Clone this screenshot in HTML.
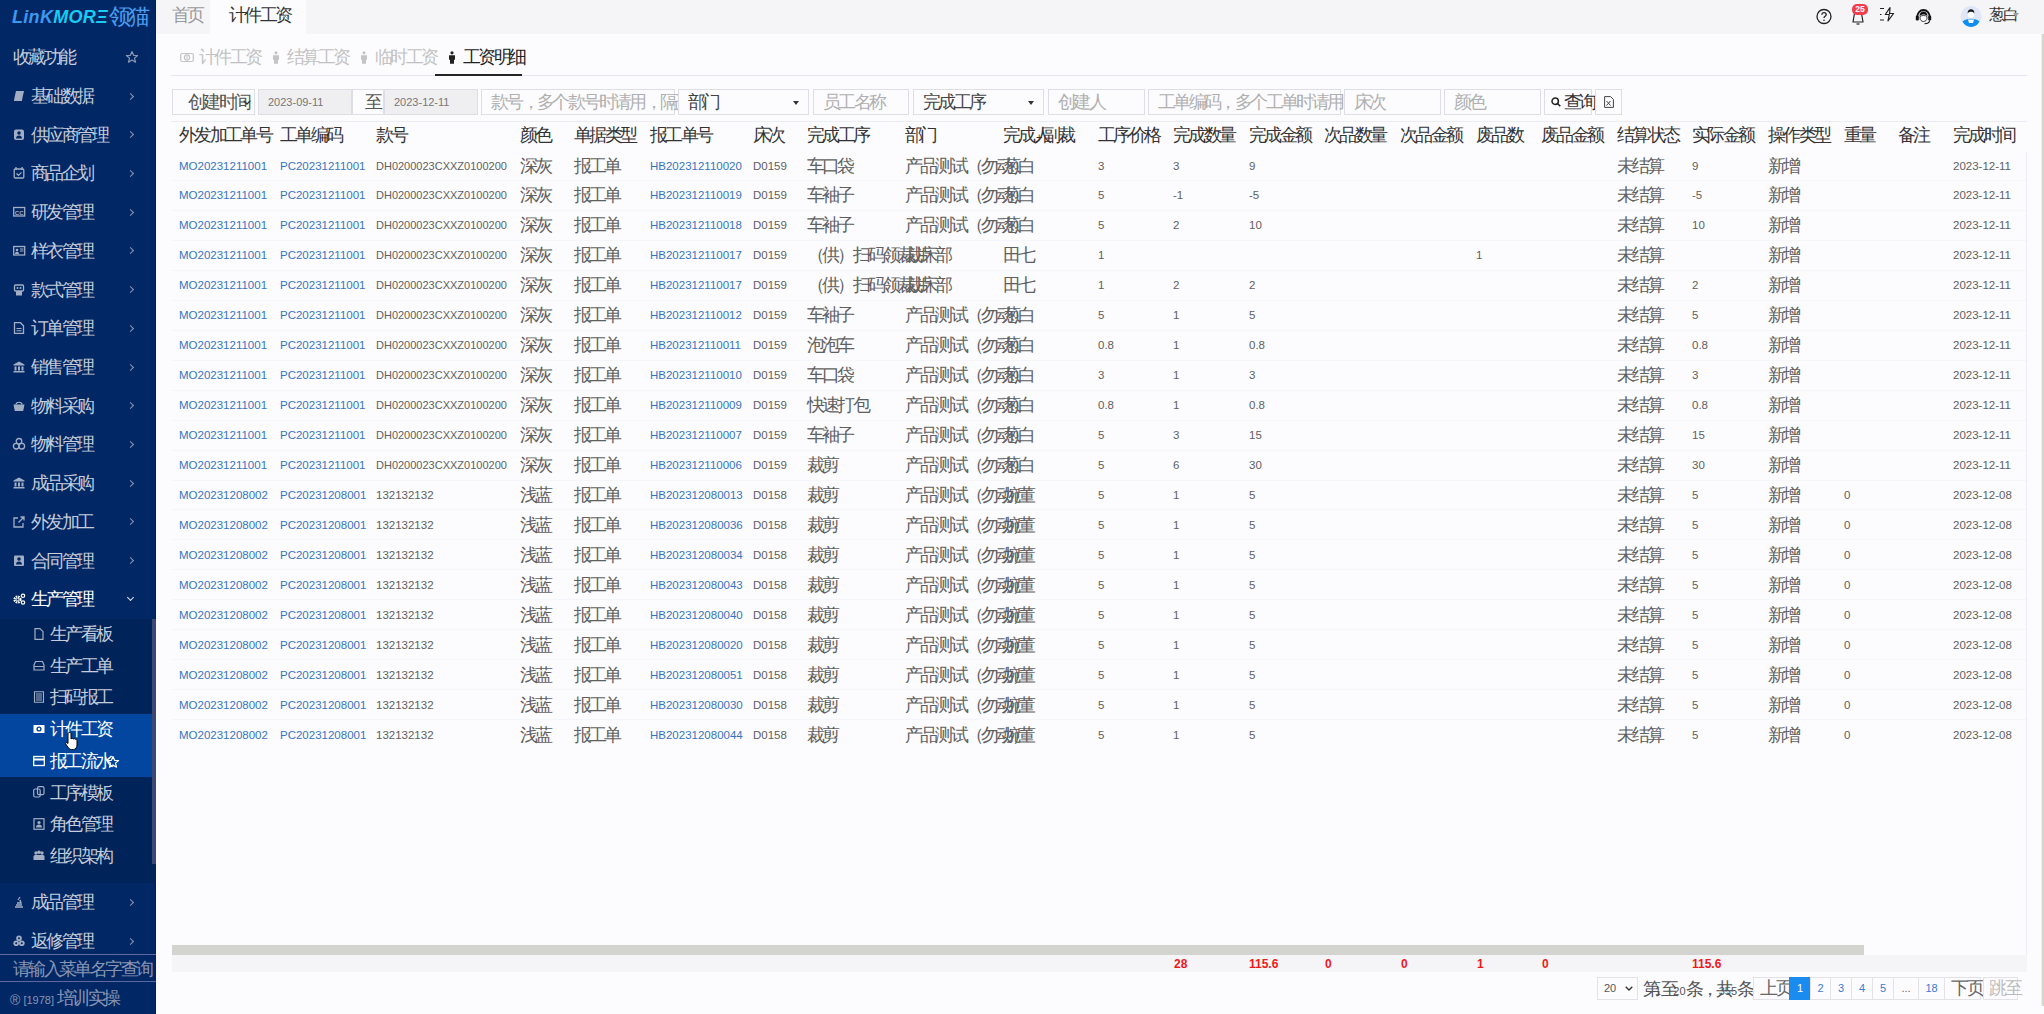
<!DOCTYPE html><html><head><meta charset="utf-8"><style>
*{box-sizing:border-box}
body{margin:0;width:2044px;height:1014px;overflow:hidden;background:#fcfcfe;font-family:"Liberation Sans",sans-serif;position:relative;font-size:11px;color:#555}
.a{position:absolute;white-space:nowrap}
.j{font-size:1.600em;font-weight:normal;letter-spacing:-0.150em;vertical-align:0.00px;display:inline-block;white-space:nowrap;text-align:justify;text-align-last:justify}
svg{position:absolute;overflow:visible}
.mi{position:absolute;left:31px;font-size:11px;line-height:14px;font-weight:bold;color:#c5ccdb}
.ch{position:absolute;left:128px;width:5px;height:5px;border-right:1px solid #8d98b4;border-top:1px solid #8d98b4;transform:rotate(45deg)}
.si{position:absolute;left:50px;font-size:11px;line-height:14px;color:#c5ccdb}
.th{position:absolute;top:128px;font-size:11px;line-height:14px;color:#333}
.td{position:absolute;font-size:11.5px;line-height:14px;color:#606060}
.lk{color:#3574c2}
.fb{position:absolute;top:89px;height:26px;border:1px solid #dedee6;background:#fcfcfe;font-size:11px;line-height:24px;color:#b0b0b0;padding-left:9px}
.pg{position:absolute;top:977px;height:23px;border:1px solid #e2e2e8;background:#fcfcfe;font-size:11px;line-height:21px;text-align:center;color:#3a7bd5}
.sum{position:absolute;top:957.5px;font-size:12px;line-height:12px;font-weight:bold;color:#f01818}
</style></head><body>

<div class="a" style="left:0;top:0;width:156px;height:1014px;background:#012865"></div>
<div class="a" style="left:155px;top:0;width:1px;height:1014px;background:#011f58"></div>
<div class="a" style="left:12px;top:8px;font-size:18px;line-height:19px;font-weight:bold;font-style:italic;letter-spacing:0.3px"><span style="color:#3d98f0">LinK</span><span style="color:#18ccf2">MORΞ</span></div>
<div class="a" style="left:109px;top:9px;font-size:14px;line-height:16px;font-weight:bold;color:#4c9ef0"><span class="j" style="width:1.284em">领猫</span></div>
<div class="mi" style="left:13px;top:50px"><span class="j" style="width:2.478em">收藏功能</span></div>
<svg style="left:126px;top:51px" width="12" height="12" viewBox="0 0 12 12"><polygon points="6,0.5 7.6,4.3 11.6,4.5 8.5,7.1 9.5,11.2 6,9 2.5,11.2 3.5,7.1 0.4,4.5 4.4,4.3" fill="none" stroke="#8d98b4" stroke-width="1.2" stroke-linejoin="round"/></svg>
<svg style="left:13px;top:90px" width="12" height="12" viewBox="0 0 12 12"><path d="M3 1h8l-2 9H1z" fill="#a3adc4"/><path d="M1 10h8v1H1z" fill="#a3adc4"/></svg>
<div class="mi" style="top:89.0px"><span class="j" style="width:2.478em">基础数据</span></div>
<div class="ch" style="top:93.5px"></div>
<svg style="left:13px;top:129px" width="12" height="12" viewBox="0 0 12 12"><rect x="1" y="0.5" width="10" height="10.5" rx="2" fill="#a3adc4"/><circle cx="6" cy="4" r="1.8" fill="#012865"/><path d="M3 9.5c0-2 1.3-3 3-3s3 1 3 3z" fill="#012865"/></svg>
<div class="mi" style="top:127.7px"><span class="j" style="width:3.075em">供应商管理</span></div>
<div class="ch" style="top:132.2px"></div>
<svg style="left:13px;top:167px" width="12" height="12" viewBox="0 0 12 12"><rect x="1.2" y="2" width="9.6" height="9" rx="1" fill="none" stroke="#a3adc4" stroke-width="1.3"/><path d="M3 0v3M9 0v3" stroke="#a3adc4" stroke-width="1.3"/><path d="M3.5 6.5l2 1.8 3-3" fill="none" stroke="#a3adc4" stroke-width="1.2"/></svg>
<div class="mi" style="top:166.4px"><span class="j" style="width:2.478em">商品企划</span></div>
<div class="ch" style="top:170.9px"></div>
<svg style="left:13px;top:206px" width="12" height="12" viewBox="0 0 12 12"><rect x="0.7" y="1.5" width="11" height="8.5" fill="none" stroke="#a3adc4" stroke-width="1.3"/><text x="6.2" y="8.5" font-size="6" font-family="Liberation Sans" font-weight="bold" text-anchor="middle" fill="#a3adc4">CC</text></svg>
<div class="mi" style="top:205.1px"><span class="j" style="width:2.478em">研发管理</span></div>
<div class="ch" style="top:209.6px"></div>
<svg style="left:13px;top:245px" width="12" height="12" viewBox="0 0 12 12"><rect x="0.7" y="1.5" width="11" height="8.5" fill="none" stroke="#a3adc4" stroke-width="1.3"/><circle cx="4" cy="5" r="1.3" fill="#a3adc4"/><path d="M2 9c0-1.5 1-2.3 2-2.3S6 7.5 6 9z" fill="#a3adc4"/><path d="M7 4h3.5M7 6h3.5" stroke="#a3adc4" stroke-width="1"/></svg>
<div class="mi" style="top:243.8px"><span class="j" style="width:2.478em">样衣管理</span></div>
<div class="ch" style="top:248.3px"></div>
<svg style="left:13px;top:284px" width="12" height="12" viewBox="0 0 12 12"><rect x="1.5" y="1" width="9" height="6" rx="1" fill="none" stroke="#a3adc4" stroke-width="1.3"/><circle cx="4.5" cy="4" r="1" fill="#a3adc4"/><circle cx="7.5" cy="4" r="1" fill="#a3adc4"/><rect x="3" y="7" width="6" height="4.5" fill="#a3adc4"/></svg>
<div class="mi" style="top:282.6px"><span class="j" style="width:2.478em">款式管理</span></div>
<div class="ch" style="top:287.1px"></div>
<svg style="left:13px;top:322px" width="12" height="12" viewBox="0 0 12 12"><path d="M1.5 0.7h6l3 3v7.6h-9z" fill="none" stroke="#a3adc4" stroke-width="1.3"/><path d="M3.5 6.5h5M3.5 8.8h5" stroke="#a3adc4" stroke-width="1.1"/></svg>
<div class="mi" style="top:321.3px"><span class="j" style="width:2.478em">订单管理</span></div>
<div class="ch" style="top:325.8px"></div>
<svg style="left:13px;top:361px" width="12" height="12" viewBox="0 0 12 12"><path d="M6 0.5l5.5 3v1h-11v-1z" fill="#a3adc4"/><path d="M1.5 5.5h2v4h-2zM5 5.5h2v4H5zM8.5 5.5h2v4h-2z" fill="#a3adc4"/><path d="M0.5 10h11v1.5H.5z" fill="#a3adc4"/></svg>
<div class="mi" style="top:360.0px"><span class="j" style="width:2.478em">销售管理</span></div>
<div class="ch" style="top:364.5px"></div>
<svg style="left:13px;top:400px" width="12" height="12" viewBox="0 0 12 12"><path d="M3 4.5c0-3 6-3 6 0" fill="none" stroke="#a3adc4" stroke-width="1.2"/><path d="M0.5 4.5h11l-1.3 6.5H1.8z" fill="#a3adc4"/></svg>
<div class="mi" style="top:398.7px"><span class="j" style="width:2.478em">物料采购</span></div>
<div class="ch" style="top:403.2px"></div>
<svg style="left:13px;top:438px" width="12" height="12" viewBox="0 0 12 12"><circle cx="6" cy="3.3" r="2.8" fill="none" stroke="#a3adc4" stroke-width="1.3"/><circle cx="3.2" cy="8.2" r="2.8" fill="none" stroke="#a3adc4" stroke-width="1.3"/><circle cx="8.8" cy="8.2" r="2.8" fill="none" stroke="#a3adc4" stroke-width="1.3"/></svg>
<div class="mi" style="top:437.4px"><span class="j" style="width:2.478em">物料管理</span></div>
<div class="ch" style="top:441.9px"></div>
<svg style="left:13px;top:477px" width="12" height="12" viewBox="0 0 12 12"><path d="M6 0.5l5.5 3v1h-11v-1z" fill="#a3adc4"/><path d="M1.5 5.5h2v4h-2zM5 5.5h2v4H5zM8.5 5.5h2v4h-2z" fill="#a3adc4"/><path d="M0.5 10h11v1.5H.5z" fill="#a3adc4"/></svg>
<div class="mi" style="top:476.1px"><span class="j" style="width:2.478em">成品采购</span></div>
<div class="ch" style="top:480.6px"></div>
<svg style="left:13px;top:516px" width="12" height="12" viewBox="0 0 12 12"><path d="M5 2H1v9h9V7" fill="none" stroke="#a3adc4" stroke-width="1.3"/><path d="M5.5 6.5L11 1M7.5 1H11v3.5" fill="none" stroke="#a3adc4" stroke-width="1.3"/></svg>
<div class="mi" style="top:514.8px"><span class="j" style="width:2.478em">外发加工</span></div>
<div class="ch" style="top:519.3px"></div>
<svg style="left:13px;top:555px" width="12" height="12" viewBox="0 0 12 12"><rect x="1" y="0.5" width="10" height="10.5" rx="1" fill="#a3adc4"/><circle cx="6" cy="4" r="1.8" fill="#012865"/><path d="M3 9.5c0-2 1.3-3 3-3s3 1 3 3z" fill="#012865"/></svg>
<div class="mi" style="top:553.5px"><span class="j" style="width:2.478em">合同管理</span></div>
<div class="ch" style="top:558.0px"></div>
<svg style="left:13px;top:593px" width="12" height="12" viewBox="0 0 12 12"><circle cx="4.5" cy="6.5" r="3" fill="none" stroke="#ffffff" stroke-width="2.2" stroke-dasharray="1.6 0.8"/><circle cx="4.5" cy="6.5" r="1.3" fill="none" stroke="#ffffff" stroke-width="1"/><circle cx="10" cy="2.8" r="1.7" fill="none" stroke="#ffffff" stroke-width="1.2"/><circle cx="10" cy="9.5" r="1.7" fill="none" stroke="#ffffff" stroke-width="1.2"/></svg>
<div class="mi" style="top:592.2px;color:#fff"><span class="j" style="width:2.478em">生产管理</span></div>
<div class="ch" style="top:594.7px;transform:rotate(135deg);border-color:#e0e4ee"></div>
<div class="a" style="left:0;top:619px;width:156px;height:264px;background:#002459"></div>
<div class="a" style="left:0;top:714px;width:152px;height:63px;background:#03469f"></div>
<div class="a" style="left:152px;top:619px;width:4px;height:245px;background:#3a4873"></div>
<svg style="left:33px;top:628px" width="12" height="12" viewBox="0 0 12 12"><path d="M2 0.7h5l3 3v7.6H2z" fill="none" stroke="#a3adc4" stroke-width="1.2"/></svg>
<div class="si" style="top:627.0px;color:#c5ccdb"><span class="j" style="width:2.478em">生产看板</span></div>
<svg style="left:33px;top:660px" width="12" height="12" viewBox="0 0 12 12"><path d="M1 7V5l1.5-3.5h7L11 5v2M1 6.5h10V10H1z" fill="none" stroke="#a3adc4" stroke-width="1.2"/></svg>
<div class="si" style="top:658.7px;color:#c5ccdb"><span class="j" style="width:2.478em">生产工单</span></div>
<svg style="left:33px;top:691px" width="12" height="12" viewBox="0 0 12 12"><path d="M1.5 0.7h9v10.6h-9z" fill="none" stroke="#a3adc4" stroke-width="1.1"/><path d="M3 3h6M3 5h6M3 7h6M3 9h6" stroke="#a3adc4" stroke-width="1"/></svg>
<div class="si" style="top:690.4px;color:#c5ccdb"><span class="j" style="width:2.478em">扫码报工</span></div>
<svg style="left:33px;top:723px" width="12" height="12" viewBox="0 0 12 12"><rect x="0.5" y="2" width="11" height="8" fill="#ffffff"/><circle cx="6" cy="6" r="2.6" fill="#03469f"/><circle cx="6" cy="6" r="1.2" fill="#ffffff"/></svg>
<div class="si" style="top:722.1px;color:#ffffff"><span class="j" style="width:2.478em">计件工资</span></div>
<svg style="left:33px;top:755px" width="12" height="12" viewBox="0 0 12 12"><rect x="0.7" y="1.5" width="10.6" height="9" fill="none" stroke="#ffffff" stroke-width="1.3"/><path d="M0.7 4.5h10.6" stroke="#ffffff" stroke-width="2"/></svg>
<div class="si" style="top:753.8px;color:#ffffff"><span class="j" style="width:2.478em">报工流水</span></div>
<svg style="left:33px;top:786px" width="12" height="12" viewBox="0 0 12 12"><rect x="0.7" y="3" width="6.5" height="8" rx="1.5" fill="none" stroke="#a3adc4" stroke-width="1.2"/><rect x="4.5" y="0.7" width="6.5" height="8" rx="1.5" fill="none" stroke="#a3adc4" stroke-width="1.2"/></svg>
<div class="si" style="top:785.5px;color:#c5ccdb"><span class="j" style="width:2.478em">工序模板</span></div>
<svg style="left:33px;top:818px" width="12" height="12" viewBox="0 0 12 12"><rect x="1" y="0.7" width="10" height="10.6" fill="none" stroke="#a3adc4" stroke-width="1.2"/><circle cx="6" cy="4.5" r="1.6" fill="#a3adc4"/><path d="M3 9.5c0-2 1.3-3 3-3s3 1 3 3z" fill="#a3adc4"/></svg>
<div class="si" style="top:817.2px;color:#c5ccdb"><span class="j" style="width:2.478em">角色管理</span></div>
<svg style="left:33px;top:850px" width="12" height="12" viewBox="0 0 12 12"><circle cx="3" cy="3" r="1.7" fill="#a3adc4"/><circle cx="6" cy="2.3" r="1.8" fill="#a3adc4"/><circle cx="9" cy="3" r="1.7" fill="#a3adc4"/><path d="M0.5 10V6.5Q0.5 5 2 5h8q1.5 0 1.5 1.5V10z" fill="#a3adc4"/></svg>
<div class="si" style="top:848.9px;color:#c5ccdb"><span class="j" style="width:2.478em">组织架构</span></div>
<svg style="left:107px;top:756px" width="12" height="12" viewBox="0 0 12 12"><polygon points="6,0.5 7.6,4.3 11.6,4.5 8.5,7.1 9.5,11.2 6,9 2.5,11.2 3.5,7.1 0.4,4.5 4.4,4.3" fill="none" stroke="#ffffff" stroke-width="1.2" stroke-linejoin="round"/></svg>
<svg style="left:65px;top:732px" width="14" height="19" viewBox="0 0 14 19"><path d="M4.5 0.5C5.5 0.5 6 1 6 2V7C6.5 6.3 8 6.3 8.3 7C8.8 6.5 10 6.5 10.3 7.3C10.8 7 12 7.2 12 8.3V13C12 15.5 10.5 17.5 8.5 17.5H6.5C5 17.5 4.3 16.8 3.5 15.8L0.7 12C0.2 11.2 1 10.2 2 10.7L3 11.5V2C3 1 3.5 0.5 4.5 0.5Z" fill="#fff" stroke="#000" stroke-width="1"/></svg>
<svg style="left:13px;top:896px" width="12" height="12" viewBox="0 0 12 12"><path d="M2 11h8M3 9h6M4 7h4l-1-3" fill="none" stroke="#a3adc4" stroke-width="1.4"/><path d="M5 4l2-3" stroke="#a3adc4" stroke-width="1.2"/></svg>
<div class="mi" style="top:895.0px"><span class="j" style="width:2.478em">成品管理</span></div>
<div class="ch" style="top:899.5px"></div>
<svg style="left:13px;top:935px" width="12" height="12" viewBox="0 0 12 12"><circle cx="6" cy="3.3" r="2.8" fill="#a3adc4"/><circle cx="3.2" cy="8.2" r="2.8" fill="#a3adc4"/><circle cx="8.8" cy="8.2" r="2.8" fill="#a3adc4"/><circle cx="6" cy="3.3" r="1" fill="#012865"/><circle cx="3.2" cy="8.2" r="1" fill="#012865"/><circle cx="8.8" cy="8.2" r="1" fill="#012865"/></svg>
<div class="mi" style="top:934.0px"><span class="j" style="width:2.478em">返修管理</span></div>
<div class="ch" style="top:938.5px"></div>
<div class="a" style="left:0;top:954px;width:156px;height:1px;background:#5c66a0"></div>
<div class="a" style="left:0;top:981px;width:156px;height:1px;background:#5c66a0"></div>
<div class="a" style="left:13px;top:962px;font-size:11px;line-height:14px;color:#8995b3"><span class="j" style="width:5.462em">请输入菜单名字查询</span></div>
<div class="a" style="left:10px;top:990px;font-size:11px;line-height:16px;color:#8995b3"><span style="font-size:14px;vertical-align:-1px">®</span> [1978] <span class="j" style="width:2.478em">培训实操</span></div>
<div class="a" style="left:156px;top:0;width:1888px;height:34px;background:#f5f5f8"></div>
<div class="a" style="left:210px;top:0;width:96px;height:34px;background:#fcfcfe"></div>
<div class="a" style="left:172px;top:8px;font-size:11px;line-height:14px;color:#999"><span class="j" style="width:1.284em">首页</span></div>
<div class="a" style="left:229px;top:8px;font-size:11px;line-height:14px;color:#333"><span class="j" style="width:2.478em">计件工资</span></div>
<svg style="left:279px;top:10px" width="8" height="8" viewBox="0 0 8 8"><path d="M.5.5l7 7M7.5.5l-7 7" stroke="#808080" stroke-width="1"/></svg>
<svg style="left:1816px;top:9px" width="16" height="16" viewBox="0 0 16 16"><circle cx="8" cy="7.5" r="7" fill="none" stroke="#222" stroke-width="1.3"/><path d="M5.8 5.8c0-1.3 1-2.1 2.2-2.1s2.2.8 2.2 2c0 1.6-2.2 1.6-2.2 3.3" fill="none" stroke="#222" stroke-width="1.3"/><circle cx="8" cy="11.2" r=".8" fill="#222"/></svg>
<svg style="left:1850px;top:9px" width="16" height="16" viewBox="0 0 16 16"><path d="M3 13l1.2-7c.4-2.5 1.8-3.5 3.8-3.5s3.4 1 3.8 3.5l1.2 7z" fill="none" stroke="#222" stroke-width="1.2" stroke-linejoin="round"/><path d="M6.5 15h3" stroke="#222" stroke-width="1.2"/></svg>
<div class="a" style="left:1852px;top:4px;width:16px;height:10.5px;border-radius:5px;background:#f23d4c;color:#fff;font-size:8.5px;font-weight:bold;line-height:10.5px;text-align:center">25</div>
<svg style="left:1879px;top:7px" width="17" height="15" viewBox="0 0 17 15"><path d="M1 1.5h4M1 7.5h1.5M1 13h4" stroke="#222" stroke-width="1.2"/><path d="M11 0.7L6.3 7.5h4l-1.3 6.3 5.6-7.3h-4z" fill="none" stroke="#222" stroke-width="1.2" stroke-linejoin="round"/></svg>
<svg style="left:1915px;top:8px" width="17" height="17" viewBox="0 0 17 17"><path d="M2.2 9.5C2.2 5 5 2 8.5 2s6.3 3 6.3 7.5" fill="none" stroke="#111" stroke-width="1.8"/><rect x="0.8" y="7.5" width="3" height="5" rx="1.2" fill="#111"/><rect x="13.2" y="7.5" width="3" height="5" rx="1.2" fill="#111"/><path d="M4.5 8c0-3 1.8-4.5 4-4.5s4 1.5 4 4.5c-1-.8-2.2-1.5-4-1.5S5.5 7.2 4.5 8z" fill="#111"/><path d="M5 8.5c.8-.6 2-1 3.5-1s2.7.4 3.5 1v1.5c0 2-1.5 3.5-3.5 3.5S5 12 5 10z" fill="#fff" stroke="#111" stroke-width=".8"/><path d="M14.5 12.5c0 2-2 3.2-5 3.2" fill="none" stroke="#111" stroke-width="1.1"/></svg>
<svg style="left:1960px;top:6px" width="22" height="21" viewBox="0 0 22 21"><circle cx="11" cy="10.5" r="10.5" fill="#dfe6f8"/><path d="M2.5 15.5c2-2 5-2.8 8.5-2.8s6.5.8 8.5 2.8A10.5 10.5 0 0 1 11 21 10.5 10.5 0 0 1 2.5 15.5z" fill="#0d8ef0"/><path d="M8 13.5h6l-1 3.5h-4z" fill="#fff"/><ellipse cx="11" cy="8" rx="3.2" ry="4" fill="#fff"/><path d="M7.6 7.5c0-3 1.5-4.3 3.4-4.3s3.4 1.3 3.4 4.3c-.8-1.3-1.6-1.8-3.4-1.8S8.4 6.2 7.6 7.5z" fill="#151515"/></svg>
<div class="a" style="left:1989px;top:8px;font-size:10px;line-height:14px;color:#333"><span class="j" style="width:1.284em">葱白</span></div>
<div class="a" style="left:2013px;top:13px;width:0;height:0;border-left:3px solid transparent;border-right:3px solid transparent;border-top:4px solid #a0a0a0"></div>
<div class="a" style="left:2041px;top:34px;width:1px;height:972px;background:#eeeef8"></div>
<div class="a" style="left:2042px;top:34px;width:2px;height:972px;background:#d6d6cc"></div>
<svg style="left:180px;top:52px" width="14" height="11" viewBox="0 0 14 11"><rect x=".7" y="1.5" width="12.6" height="8" rx="1.5" fill="none" stroke="#c4c4c4" stroke-width="1.2"/><circle cx="7" cy="5.5" r="2.6" fill="none" stroke="#c4c4c4" stroke-width="1.1"/><path d="M7 4v3" stroke="#c4c4c4" stroke-width="1"/></svg>
<div class="a" style="left:199px;top:50px;font-size:11px;line-height:14px;color:#c2c2c2"><span class="j" style="width:2.478em">计件工资</span></div>
<svg style="left:272px;top:51px" width="8" height="13" viewBox="0 0 8 13"><circle cx="4" cy="1.8" r="1.6" fill="#c4c4c4"/><path d="M1 4.2h6v4.5H6v4H2v-4H1z" fill="#c4c4c4"/></svg>
<div class="a" style="left:287px;top:50px;font-size:11px;line-height:14px;color:#c2c2c2"><span class="j" style="width:2.478em">结算工资</span></div>
<svg style="left:360px;top:51px" width="8" height="13" viewBox="0 0 8 13"><circle cx="4" cy="1.8" r="1.6" fill="#c4c4c4"/><path d="M1 4.2h6v4.5H6v4H2v-4H1z" fill="#c4c4c4"/></svg>
<div class="a" style="left:375px;top:50px;font-size:11px;line-height:14px;color:#c2c2c2"><span class="j" style="width:2.478em">临时工资</span></div>
<svg style="left:448px;top:51px" width="8" height="13" viewBox="0 0 8 13"><circle cx="4" cy="1.8" r="1.6" fill="#222"/><path d="M1 4.2h6v4.5H6v4H2v-4H1z" fill="#222"/></svg>
<div class="a" style="left:463px;top:50px;font-size:11px;line-height:14px;color:#222"><span class="j" style="width:2.478em">工资明细</span></div>
<div class="a" style="left:171px;top:75px;width:1856px;height:1px;background:#e4e4f6"></div>
<div class="a" style="left:435px;top:74px;width:87px;height:2px;background:#252525"></div>
<div class="fb" style="left:172px;width:83px;color:#555;background:#fcfcfe">&nbsp;&nbsp;<span class="j" style="width:2.478em">创建时间</span><svg style="left:70px;top:10px" width="8" height="5" viewBox="0 0 8 5"><path d="M.7.7L4 4 7.3.7" fill="none" stroke="#333" stroke-width="1.3"/></svg></div>
<div class="fb" style="left:258px;width:94px;color:#777;background:#efeff1">2023-09-11</div>
<div class="fb" style="left:352px;width:32px;color:#555;background:#fcfcfe">&nbsp;<span class="j" style="width:0.688em">至</span></div>
<div class="fb" style="left:384px;width:94px;color:#777;background:#efeff1">2023-12-11</div>
<div class="fb" style="left:481px;width:194px;color:#b0b0b0;background:#fcfcfe"><span class="j" style="width:7.850em">款号，多个款号时请用，隔开</span></div>
<div class="fb" style="left:678px;width:131px;color:#444;background:#fcfcfe"><span class="j" style="width:1.284em">部门</span><span class="a" style="left:114px;top:11px;border-left:3.5px solid transparent;border-right:3.5px solid transparent;border-top:4px solid #333"></span></div>
<div class="fb" style="left:813px;width:96px;color:#b0b0b0;background:#fcfcfe"><span class="j" style="width:2.478em">员工名称</span></div>
<div class="fb" style="left:913px;width:131px;color:#444;background:#fcfcfe"><span class="j" style="width:2.478em">完成工序</span><span class="a" style="left:114px;top:11px;border-left:3.5px solid transparent;border-right:3.5px solid transparent;border-top:4px solid #333"></span></div>
<div class="fb" style="left:1048px;width:97px;color:#b0b0b0;background:#fcfcfe"><span class="j" style="width:1.881em">创建人</span></div>
<div class="fb" style="left:1148px;width:193px;color:#b0b0b0;background:#fcfcfe"><span class="j" style="width:9.044em">工单编码，多个工单时请用，隔开</span></div>
<div class="fb" style="left:1344px;width:97px;color:#b0b0b0;background:#fcfcfe"><span class="j" style="width:1.284em">床次</span></div>
<div class="fb" style="left:1444px;width:97px;color:#b0b0b0;background:#fcfcfe"><span class="j" style="width:1.284em">颜色</span></div>
<div class="fb" style="left:1544px;width:48px;color:#333;padding-left:19px"><span class="j" style="width:1.284em">查询</span><svg style="left:6px;top:7px" width="10" height="10" viewBox="0 0 10 10"><circle cx="4.2" cy="4.2" r="3.2" fill="none" stroke="#222" stroke-width="1.5"/><path d="M6.5 6.5L9.3 9.3" stroke="#222" stroke-width="1.6"/></svg></div>
<div class="fb" style="left:1595px;width:27px;padding:0"><svg style="left:8px;top:6px" width="10" height="12" viewBox="0 0 10 12"><path d="M.6.6h6l2.8 2.8v8H.6z" fill="none" stroke="#444" stroke-width="1"/><path d="M2.5 5l4 4.5M6.5 5l-4 4.5" stroke="#444" stroke-width="1"/></svg></div>
<div class="a" style="left:171px;top:121px;width:1856px;height:1px;background:#ececf8"></div>
<div class="th" style="left:179px"><span class="j" style="width:3.672em">外发加工单号</span></div>
<div class="th" style="left:280px"><span class="j" style="width:2.478em">工单编码</span></div>
<div class="th" style="left:376px"><span class="j" style="width:1.284em">款号</span></div>
<div class="th" style="left:520px"><span class="j" style="width:1.284em">颜色</span></div>
<div class="th" style="left:574px"><span class="j" style="width:2.478em">单据类型</span></div>
<div class="th" style="left:650px"><span class="j" style="width:2.478em">报工单号</span></div>
<div class="th" style="left:753px"><span class="j" style="width:1.284em">床次</span></div>
<div class="th" style="left:807px"><span class="j" style="width:2.478em">完成工序</span></div>
<div class="th" style="left:905px"><span class="j" style="width:1.284em">部门</span></div>
<div class="th" style="left:1003px"><span class="j" style="width:1.881em">完成人</span>+<span class="j" style="width:1.284em">副裁</span></div>
<div class="th" style="left:1098px"><span class="j" style="width:2.478em">工序价格</span></div>
<div class="th" style="left:1173px"><span class="j" style="width:2.478em">完成数量</span></div>
<div class="th" style="left:1249px"><span class="j" style="width:2.478em">完成金额</span></div>
<div class="th" style="left:1324px"><span class="j" style="width:2.478em">次品数量</span></div>
<div class="th" style="left:1400px"><span class="j" style="width:2.478em">次品金额</span></div>
<div class="th" style="left:1476px"><span class="j" style="width:1.881em">废品数</span></div>
<div class="th" style="left:1541px"><span class="j" style="width:2.478em">废品金额</span></div>
<div class="th" style="left:1617px"><span class="j" style="width:2.478em">结算状态</span></div>
<div class="th" style="left:1692px"><span class="j" style="width:2.478em">实际金额</span></div>
<div class="th" style="left:1768px"><span class="j" style="width:2.478em">操作类型</span></div>
<div class="th" style="left:1844px"><span class="j" style="width:1.284em">重量</span></div>
<div class="th" style="left:1898px"><span class="j" style="width:1.284em">备注</span></div>
<div class="th" style="left:1953px"><span class="j" style="width:2.478em">完成时间</span></div>
<div class="a" style="left:172px;top:180px;width:1854px;height:1px;background:#f5f5fc"></div>
<div class="td lk" style="left:179px;top:158.5px">MO20231211001</div>
<div class="td lk" style="left:280px;top:158.5px">PC20231211001</div>
<div class="td" style="left:376px;top:158.5px;font-size:11px">DH0200023CXXZ0100200</div>
<div class="td" style="left:520px;top:158.5px"><span class="j" style="width:1.284em">深灰</span></div>
<div class="td" style="left:574px;top:158.5px"><span class="j" style="width:1.881em">报工单</span></div>
<div class="td lk" style="left:650px;top:158.5px">HB202312110020</div>
<div class="td" style="left:753px;top:158.5px">D0159</div>
<div class="td" style="left:807px;top:158.5px"><span class="j" style="width:1.881em">车口袋</span></div>
<div class="td" style="left:905px;top:158.5px"><span class="j" style="width:4.866em">产品测试（勿动）</span></div>
<div class="td" style="left:1003px;top:158.5px"><span class="j" style="width:1.284em">葱白</span></div>
<div class="td" style="left:1098px;top:158.5px">3</div>
<div class="td" style="left:1173px;top:158.5px">3</div>
<div class="td" style="left:1249px;top:158.5px">9</div>
<div class="td" style="left:1617px;top:158.5px"><span class="j" style="width:1.881em">未结算</span></div>
<div class="td" style="left:1692px;top:158.5px">9</div>
<div class="td" style="left:1768px;top:158.5px"><span class="j" style="width:1.284em">新增</span></div>
<div class="td" style="left:1953px;top:158.5px">2023-12-11</div>
<div class="a" style="left:172px;top:210px;width:1854px;height:1px;background:#f5f5fc"></div>
<div class="td lk" style="left:179px;top:188.4px">MO20231211001</div>
<div class="td lk" style="left:280px;top:188.4px">PC20231211001</div>
<div class="td" style="left:376px;top:188.4px;font-size:11px">DH0200023CXXZ0100200</div>
<div class="td" style="left:520px;top:188.4px"><span class="j" style="width:1.284em">深灰</span></div>
<div class="td" style="left:574px;top:188.4px"><span class="j" style="width:1.881em">报工单</span></div>
<div class="td lk" style="left:650px;top:188.4px">HB202312110019</div>
<div class="td" style="left:753px;top:188.4px">D0159</div>
<div class="td" style="left:807px;top:188.4px"><span class="j" style="width:1.881em">车袖子</span></div>
<div class="td" style="left:905px;top:188.4px"><span class="j" style="width:4.866em">产品测试（勿动）</span></div>
<div class="td" style="left:1003px;top:188.4px"><span class="j" style="width:1.284em">葱白</span></div>
<div class="td" style="left:1098px;top:188.4px">5</div>
<div class="td" style="left:1173px;top:188.4px">-1</div>
<div class="td" style="left:1249px;top:188.4px">-5</div>
<div class="td" style="left:1617px;top:188.4px"><span class="j" style="width:1.881em">未结算</span></div>
<div class="td" style="left:1692px;top:188.4px">-5</div>
<div class="td" style="left:1768px;top:188.4px"><span class="j" style="width:1.284em">新增</span></div>
<div class="td" style="left:1953px;top:188.4px">2023-12-11</div>
<div class="a" style="left:172px;top:240px;width:1854px;height:1px;background:#f5f5fc"></div>
<div class="td lk" style="left:179px;top:218.4px">MO20231211001</div>
<div class="td lk" style="left:280px;top:218.4px">PC20231211001</div>
<div class="td" style="left:376px;top:218.4px;font-size:11px">DH0200023CXXZ0100200</div>
<div class="td" style="left:520px;top:218.4px"><span class="j" style="width:1.284em">深灰</span></div>
<div class="td" style="left:574px;top:218.4px"><span class="j" style="width:1.881em">报工单</span></div>
<div class="td lk" style="left:650px;top:218.4px">HB202312110018</div>
<div class="td" style="left:753px;top:218.4px">D0159</div>
<div class="td" style="left:807px;top:218.4px"><span class="j" style="width:1.881em">车袖子</span></div>
<div class="td" style="left:905px;top:218.4px"><span class="j" style="width:4.866em">产品测试（勿动）</span></div>
<div class="td" style="left:1003px;top:218.4px"><span class="j" style="width:1.284em">葱白</span></div>
<div class="td" style="left:1098px;top:218.4px">5</div>
<div class="td" style="left:1173px;top:218.4px">2</div>
<div class="td" style="left:1249px;top:218.4px">10</div>
<div class="td" style="left:1617px;top:218.4px"><span class="j" style="width:1.881em">未结算</span></div>
<div class="td" style="left:1692px;top:218.4px">10</div>
<div class="td" style="left:1768px;top:218.4px"><span class="j" style="width:1.284em">新增</span></div>
<div class="td" style="left:1953px;top:218.4px">2023-12-11</div>
<div class="a" style="left:172px;top:270px;width:1854px;height:1px;background:#f5f5fc"></div>
<div class="td lk" style="left:179px;top:248.3px">MO20231211001</div>
<div class="td lk" style="left:280px;top:248.3px">PC20231211001</div>
<div class="td" style="left:376px;top:248.3px;font-size:11px">DH0200023CXXZ0100200</div>
<div class="td" style="left:520px;top:248.3px"><span class="j" style="width:1.284em">深灰</span></div>
<div class="td" style="left:574px;top:248.3px"><span class="j" style="width:1.881em">报工单</span></div>
<div class="td lk" style="left:650px;top:248.3px">HB202312110017</div>
<div class="td" style="left:753px;top:248.3px">D0159</div>
<div class="td" style="left:807px;top:248.3px"><span class="j" style="width:4.866em">（供）扫码领裁片</span></div>
<div class="td" style="left:905px;top:248.3px"><span class="j" style="width:1.881em">裁床部</span></div>
<div class="td" style="left:1003px;top:248.3px"><span class="j" style="width:1.284em">田七</span></div>
<div class="td" style="left:1098px;top:248.3px">1</div>
<div class="td" style="left:1476px;top:248.3px">1</div>
<div class="td" style="left:1617px;top:248.3px"><span class="j" style="width:1.881em">未结算</span></div>
<div class="td" style="left:1768px;top:248.3px"><span class="j" style="width:1.284em">新增</span></div>
<div class="td" style="left:1953px;top:248.3px">2023-12-11</div>
<div class="a" style="left:172px;top:300px;width:1854px;height:1px;background:#f5f5fc"></div>
<div class="td lk" style="left:179px;top:278.3px">MO20231211001</div>
<div class="td lk" style="left:280px;top:278.3px">PC20231211001</div>
<div class="td" style="left:376px;top:278.3px;font-size:11px">DH0200023CXXZ0100200</div>
<div class="td" style="left:520px;top:278.3px"><span class="j" style="width:1.284em">深灰</span></div>
<div class="td" style="left:574px;top:278.3px"><span class="j" style="width:1.881em">报工单</span></div>
<div class="td lk" style="left:650px;top:278.3px">HB202312110017</div>
<div class="td" style="left:753px;top:278.3px">D0159</div>
<div class="td" style="left:807px;top:278.3px"><span class="j" style="width:4.866em">（供）扫码领裁片</span></div>
<div class="td" style="left:905px;top:278.3px"><span class="j" style="width:1.881em">裁床部</span></div>
<div class="td" style="left:1003px;top:278.3px"><span class="j" style="width:1.284em">田七</span></div>
<div class="td" style="left:1098px;top:278.3px">1</div>
<div class="td" style="left:1173px;top:278.3px">2</div>
<div class="td" style="left:1249px;top:278.3px">2</div>
<div class="td" style="left:1617px;top:278.3px"><span class="j" style="width:1.881em">未结算</span></div>
<div class="td" style="left:1692px;top:278.3px">2</div>
<div class="td" style="left:1768px;top:278.3px"><span class="j" style="width:1.284em">新增</span></div>
<div class="td" style="left:1953px;top:278.3px">2023-12-11</div>
<div class="a" style="left:172px;top:330px;width:1854px;height:1px;background:#f5f5fc"></div>
<div class="td lk" style="left:179px;top:308.2px">MO20231211001</div>
<div class="td lk" style="left:280px;top:308.2px">PC20231211001</div>
<div class="td" style="left:376px;top:308.2px;font-size:11px">DH0200023CXXZ0100200</div>
<div class="td" style="left:520px;top:308.2px"><span class="j" style="width:1.284em">深灰</span></div>
<div class="td" style="left:574px;top:308.2px"><span class="j" style="width:1.881em">报工单</span></div>
<div class="td lk" style="left:650px;top:308.2px">HB202312110012</div>
<div class="td" style="left:753px;top:308.2px">D0159</div>
<div class="td" style="left:807px;top:308.2px"><span class="j" style="width:1.881em">车袖子</span></div>
<div class="td" style="left:905px;top:308.2px"><span class="j" style="width:4.866em">产品测试（勿动）</span></div>
<div class="td" style="left:1003px;top:308.2px"><span class="j" style="width:1.284em">葱白</span></div>
<div class="td" style="left:1098px;top:308.2px">5</div>
<div class="td" style="left:1173px;top:308.2px">1</div>
<div class="td" style="left:1249px;top:308.2px">5</div>
<div class="td" style="left:1617px;top:308.2px"><span class="j" style="width:1.881em">未结算</span></div>
<div class="td" style="left:1692px;top:308.2px">5</div>
<div class="td" style="left:1768px;top:308.2px"><span class="j" style="width:1.284em">新增</span></div>
<div class="td" style="left:1953px;top:308.2px">2023-12-11</div>
<div class="a" style="left:172px;top:360px;width:1854px;height:1px;background:#f5f5fc"></div>
<div class="td lk" style="left:179px;top:338.2px">MO20231211001</div>
<div class="td lk" style="left:280px;top:338.2px">PC20231211001</div>
<div class="td" style="left:376px;top:338.2px;font-size:11px">DH0200023CXXZ0100200</div>
<div class="td" style="left:520px;top:338.2px"><span class="j" style="width:1.284em">深灰</span></div>
<div class="td" style="left:574px;top:338.2px"><span class="j" style="width:1.881em">报工单</span></div>
<div class="td lk" style="left:650px;top:338.2px">HB202312110011</div>
<div class="td" style="left:753px;top:338.2px">D0159</div>
<div class="td" style="left:807px;top:338.2px"><span class="j" style="width:1.881em">泡泡车</span></div>
<div class="td" style="left:905px;top:338.2px"><span class="j" style="width:4.866em">产品测试（勿动）</span></div>
<div class="td" style="left:1003px;top:338.2px"><span class="j" style="width:1.284em">葱白</span></div>
<div class="td" style="left:1098px;top:338.2px">0.8</div>
<div class="td" style="left:1173px;top:338.2px">1</div>
<div class="td" style="left:1249px;top:338.2px">0.8</div>
<div class="td" style="left:1617px;top:338.2px"><span class="j" style="width:1.881em">未结算</span></div>
<div class="td" style="left:1692px;top:338.2px">0.8</div>
<div class="td" style="left:1768px;top:338.2px"><span class="j" style="width:1.284em">新增</span></div>
<div class="td" style="left:1953px;top:338.2px">2023-12-11</div>
<div class="a" style="left:172px;top:390px;width:1854px;height:1px;background:#f5f5fc"></div>
<div class="td lk" style="left:179px;top:368.1px">MO20231211001</div>
<div class="td lk" style="left:280px;top:368.1px">PC20231211001</div>
<div class="td" style="left:376px;top:368.1px;font-size:11px">DH0200023CXXZ0100200</div>
<div class="td" style="left:520px;top:368.1px"><span class="j" style="width:1.284em">深灰</span></div>
<div class="td" style="left:574px;top:368.1px"><span class="j" style="width:1.881em">报工单</span></div>
<div class="td lk" style="left:650px;top:368.1px">HB202312110010</div>
<div class="td" style="left:753px;top:368.1px">D0159</div>
<div class="td" style="left:807px;top:368.1px"><span class="j" style="width:1.881em">车口袋</span></div>
<div class="td" style="left:905px;top:368.1px"><span class="j" style="width:4.866em">产品测试（勿动）</span></div>
<div class="td" style="left:1003px;top:368.1px"><span class="j" style="width:1.284em">葱白</span></div>
<div class="td" style="left:1098px;top:368.1px">3</div>
<div class="td" style="left:1173px;top:368.1px">1</div>
<div class="td" style="left:1249px;top:368.1px">3</div>
<div class="td" style="left:1617px;top:368.1px"><span class="j" style="width:1.881em">未结算</span></div>
<div class="td" style="left:1692px;top:368.1px">3</div>
<div class="td" style="left:1768px;top:368.1px"><span class="j" style="width:1.284em">新增</span></div>
<div class="td" style="left:1953px;top:368.1px">2023-12-11</div>
<div class="a" style="left:172px;top:420px;width:1854px;height:1px;background:#f5f5fc"></div>
<div class="td lk" style="left:179px;top:398.1px">MO20231211001</div>
<div class="td lk" style="left:280px;top:398.1px">PC20231211001</div>
<div class="td" style="left:376px;top:398.1px;font-size:11px">DH0200023CXXZ0100200</div>
<div class="td" style="left:520px;top:398.1px"><span class="j" style="width:1.284em">深灰</span></div>
<div class="td" style="left:574px;top:398.1px"><span class="j" style="width:1.881em">报工单</span></div>
<div class="td lk" style="left:650px;top:398.1px">HB202312110009</div>
<div class="td" style="left:753px;top:398.1px">D0159</div>
<div class="td" style="left:807px;top:398.1px"><span class="j" style="width:2.478em">快速打包</span></div>
<div class="td" style="left:905px;top:398.1px"><span class="j" style="width:4.866em">产品测试（勿动）</span></div>
<div class="td" style="left:1003px;top:398.1px"><span class="j" style="width:1.284em">葱白</span></div>
<div class="td" style="left:1098px;top:398.1px">0.8</div>
<div class="td" style="left:1173px;top:398.1px">1</div>
<div class="td" style="left:1249px;top:398.1px">0.8</div>
<div class="td" style="left:1617px;top:398.1px"><span class="j" style="width:1.881em">未结算</span></div>
<div class="td" style="left:1692px;top:398.1px">0.8</div>
<div class="td" style="left:1768px;top:398.1px"><span class="j" style="width:1.284em">新增</span></div>
<div class="td" style="left:1953px;top:398.1px">2023-12-11</div>
<div class="a" style="left:172px;top:450px;width:1854px;height:1px;background:#f5f5fc"></div>
<div class="td lk" style="left:179px;top:428.1px">MO20231211001</div>
<div class="td lk" style="left:280px;top:428.1px">PC20231211001</div>
<div class="td" style="left:376px;top:428.1px;font-size:11px">DH0200023CXXZ0100200</div>
<div class="td" style="left:520px;top:428.1px"><span class="j" style="width:1.284em">深灰</span></div>
<div class="td" style="left:574px;top:428.1px"><span class="j" style="width:1.881em">报工单</span></div>
<div class="td lk" style="left:650px;top:428.1px">HB202312110007</div>
<div class="td" style="left:753px;top:428.1px">D0159</div>
<div class="td" style="left:807px;top:428.1px"><span class="j" style="width:1.881em">车袖子</span></div>
<div class="td" style="left:905px;top:428.1px"><span class="j" style="width:4.866em">产品测试（勿动）</span></div>
<div class="td" style="left:1003px;top:428.1px"><span class="j" style="width:1.284em">葱白</span></div>
<div class="td" style="left:1098px;top:428.1px">5</div>
<div class="td" style="left:1173px;top:428.1px">3</div>
<div class="td" style="left:1249px;top:428.1px">15</div>
<div class="td" style="left:1617px;top:428.1px"><span class="j" style="width:1.881em">未结算</span></div>
<div class="td" style="left:1692px;top:428.1px">15</div>
<div class="td" style="left:1768px;top:428.1px"><span class="j" style="width:1.284em">新增</span></div>
<div class="td" style="left:1953px;top:428.1px">2023-12-11</div>
<div class="a" style="left:172px;top:480px;width:1854px;height:1px;background:#f5f5fc"></div>
<div class="td lk" style="left:179px;top:458.0px">MO20231211001</div>
<div class="td lk" style="left:280px;top:458.0px">PC20231211001</div>
<div class="td" style="left:376px;top:458.0px;font-size:11px">DH0200023CXXZ0100200</div>
<div class="td" style="left:520px;top:458.0px"><span class="j" style="width:1.284em">深灰</span></div>
<div class="td" style="left:574px;top:458.0px"><span class="j" style="width:1.881em">报工单</span></div>
<div class="td lk" style="left:650px;top:458.0px">HB202312110006</div>
<div class="td" style="left:753px;top:458.0px">D0159</div>
<div class="td" style="left:807px;top:458.0px"><span class="j" style="width:1.284em">裁剪</span></div>
<div class="td" style="left:905px;top:458.0px"><span class="j" style="width:4.866em">产品测试（勿动）</span></div>
<div class="td" style="left:1003px;top:458.0px"><span class="j" style="width:1.284em">葱白</span></div>
<div class="td" style="left:1098px;top:458.0px">5</div>
<div class="td" style="left:1173px;top:458.0px">6</div>
<div class="td" style="left:1249px;top:458.0px">30</div>
<div class="td" style="left:1617px;top:458.0px"><span class="j" style="width:1.881em">未结算</span></div>
<div class="td" style="left:1692px;top:458.0px">30</div>
<div class="td" style="left:1768px;top:458.0px"><span class="j" style="width:1.284em">新增</span></div>
<div class="td" style="left:1953px;top:458.0px">2023-12-11</div>
<div class="a" style="left:172px;top:509px;width:1854px;height:1px;background:#f5f5fc"></div>
<div class="td lk" style="left:179px;top:487.9px">MO20231208002</div>
<div class="td lk" style="left:280px;top:487.9px">PC20231208001</div>
<div class="td" style="left:376px;top:487.9px">132132132</div>
<div class="td" style="left:520px;top:487.9px"><span class="j" style="width:1.284em">浅蓝</span></div>
<div class="td" style="left:574px;top:487.9px"><span class="j" style="width:1.881em">报工单</span></div>
<div class="td lk" style="left:650px;top:487.9px">HB202312080013</div>
<div class="td" style="left:753px;top:487.9px">D0158</div>
<div class="td" style="left:807px;top:487.9px"><span class="j" style="width:1.284em">裁剪</span></div>
<div class="td" style="left:905px;top:487.9px"><span class="j" style="width:4.866em">产品测试（勿动）</span></div>
<div class="td" style="left:1003px;top:487.9px"><span class="j" style="width:1.284em">婉董</span></div>
<div class="td" style="left:1098px;top:487.9px">5</div>
<div class="td" style="left:1173px;top:487.9px">1</div>
<div class="td" style="left:1249px;top:487.9px">5</div>
<div class="td" style="left:1617px;top:487.9px"><span class="j" style="width:1.881em">未结算</span></div>
<div class="td" style="left:1692px;top:487.9px">5</div>
<div class="td" style="left:1768px;top:487.9px"><span class="j" style="width:1.284em">新增</span></div>
<div class="td" style="left:1844px;top:487.9px">0</div>
<div class="td" style="left:1953px;top:487.9px">2023-12-08</div>
<div class="a" style="left:172px;top:539px;width:1854px;height:1px;background:#f5f5fc"></div>
<div class="td lk" style="left:179px;top:517.9px">MO20231208002</div>
<div class="td lk" style="left:280px;top:517.9px">PC20231208001</div>
<div class="td" style="left:376px;top:517.9px">132132132</div>
<div class="td" style="left:520px;top:517.9px"><span class="j" style="width:1.284em">浅蓝</span></div>
<div class="td" style="left:574px;top:517.9px"><span class="j" style="width:1.881em">报工单</span></div>
<div class="td lk" style="left:650px;top:517.9px">HB202312080036</div>
<div class="td" style="left:753px;top:517.9px">D0158</div>
<div class="td" style="left:807px;top:517.9px"><span class="j" style="width:1.284em">裁剪</span></div>
<div class="td" style="left:905px;top:517.9px"><span class="j" style="width:4.866em">产品测试（勿动）</span></div>
<div class="td" style="left:1003px;top:517.9px"><span class="j" style="width:1.284em">婉董</span></div>
<div class="td" style="left:1098px;top:517.9px">5</div>
<div class="td" style="left:1173px;top:517.9px">1</div>
<div class="td" style="left:1249px;top:517.9px">5</div>
<div class="td" style="left:1617px;top:517.9px"><span class="j" style="width:1.881em">未结算</span></div>
<div class="td" style="left:1692px;top:517.9px">5</div>
<div class="td" style="left:1768px;top:517.9px"><span class="j" style="width:1.284em">新增</span></div>
<div class="td" style="left:1844px;top:517.9px">0</div>
<div class="td" style="left:1953px;top:517.9px">2023-12-08</div>
<div class="a" style="left:172px;top:569px;width:1854px;height:1px;background:#f5f5fc"></div>
<div class="td lk" style="left:179px;top:547.8px">MO20231208002</div>
<div class="td lk" style="left:280px;top:547.8px">PC20231208001</div>
<div class="td" style="left:376px;top:547.8px">132132132</div>
<div class="td" style="left:520px;top:547.8px"><span class="j" style="width:1.284em">浅蓝</span></div>
<div class="td" style="left:574px;top:547.8px"><span class="j" style="width:1.881em">报工单</span></div>
<div class="td lk" style="left:650px;top:547.8px">HB202312080034</div>
<div class="td" style="left:753px;top:547.8px">D0158</div>
<div class="td" style="left:807px;top:547.8px"><span class="j" style="width:1.284em">裁剪</span></div>
<div class="td" style="left:905px;top:547.8px"><span class="j" style="width:4.866em">产品测试（勿动）</span></div>
<div class="td" style="left:1003px;top:547.8px"><span class="j" style="width:1.284em">婉董</span></div>
<div class="td" style="left:1098px;top:547.8px">5</div>
<div class="td" style="left:1173px;top:547.8px">1</div>
<div class="td" style="left:1249px;top:547.8px">5</div>
<div class="td" style="left:1617px;top:547.8px"><span class="j" style="width:1.881em">未结算</span></div>
<div class="td" style="left:1692px;top:547.8px">5</div>
<div class="td" style="left:1768px;top:547.8px"><span class="j" style="width:1.284em">新增</span></div>
<div class="td" style="left:1844px;top:547.8px">0</div>
<div class="td" style="left:1953px;top:547.8px">2023-12-08</div>
<div class="a" style="left:172px;top:599px;width:1854px;height:1px;background:#f5f5fc"></div>
<div class="td lk" style="left:179px;top:577.8px">MO20231208002</div>
<div class="td lk" style="left:280px;top:577.8px">PC20231208001</div>
<div class="td" style="left:376px;top:577.8px">132132132</div>
<div class="td" style="left:520px;top:577.8px"><span class="j" style="width:1.284em">浅蓝</span></div>
<div class="td" style="left:574px;top:577.8px"><span class="j" style="width:1.881em">报工单</span></div>
<div class="td lk" style="left:650px;top:577.8px">HB202312080043</div>
<div class="td" style="left:753px;top:577.8px">D0158</div>
<div class="td" style="left:807px;top:577.8px"><span class="j" style="width:1.284em">裁剪</span></div>
<div class="td" style="left:905px;top:577.8px"><span class="j" style="width:4.866em">产品测试（勿动）</span></div>
<div class="td" style="left:1003px;top:577.8px"><span class="j" style="width:1.284em">婉董</span></div>
<div class="td" style="left:1098px;top:577.8px">5</div>
<div class="td" style="left:1173px;top:577.8px">1</div>
<div class="td" style="left:1249px;top:577.8px">5</div>
<div class="td" style="left:1617px;top:577.8px"><span class="j" style="width:1.881em">未结算</span></div>
<div class="td" style="left:1692px;top:577.8px">5</div>
<div class="td" style="left:1768px;top:577.8px"><span class="j" style="width:1.284em">新增</span></div>
<div class="td" style="left:1844px;top:577.8px">0</div>
<div class="td" style="left:1953px;top:577.8px">2023-12-08</div>
<div class="a" style="left:172px;top:629px;width:1854px;height:1px;background:#f5f5fc"></div>
<div class="td lk" style="left:179px;top:607.8px">MO20231208002</div>
<div class="td lk" style="left:280px;top:607.8px">PC20231208001</div>
<div class="td" style="left:376px;top:607.8px">132132132</div>
<div class="td" style="left:520px;top:607.8px"><span class="j" style="width:1.284em">浅蓝</span></div>
<div class="td" style="left:574px;top:607.8px"><span class="j" style="width:1.881em">报工单</span></div>
<div class="td lk" style="left:650px;top:607.8px">HB202312080040</div>
<div class="td" style="left:753px;top:607.8px">D0158</div>
<div class="td" style="left:807px;top:607.8px"><span class="j" style="width:1.284em">裁剪</span></div>
<div class="td" style="left:905px;top:607.8px"><span class="j" style="width:4.866em">产品测试（勿动）</span></div>
<div class="td" style="left:1003px;top:607.8px"><span class="j" style="width:1.284em">婉董</span></div>
<div class="td" style="left:1098px;top:607.8px">5</div>
<div class="td" style="left:1173px;top:607.8px">1</div>
<div class="td" style="left:1249px;top:607.8px">5</div>
<div class="td" style="left:1617px;top:607.8px"><span class="j" style="width:1.881em">未结算</span></div>
<div class="td" style="left:1692px;top:607.8px">5</div>
<div class="td" style="left:1768px;top:607.8px"><span class="j" style="width:1.284em">新增</span></div>
<div class="td" style="left:1844px;top:607.8px">0</div>
<div class="td" style="left:1953px;top:607.8px">2023-12-08</div>
<div class="a" style="left:172px;top:659px;width:1854px;height:1px;background:#f5f5fc"></div>
<div class="td lk" style="left:179px;top:637.7px">MO20231208002</div>
<div class="td lk" style="left:280px;top:637.7px">PC20231208001</div>
<div class="td" style="left:376px;top:637.7px">132132132</div>
<div class="td" style="left:520px;top:637.7px"><span class="j" style="width:1.284em">浅蓝</span></div>
<div class="td" style="left:574px;top:637.7px"><span class="j" style="width:1.881em">报工单</span></div>
<div class="td lk" style="left:650px;top:637.7px">HB202312080020</div>
<div class="td" style="left:753px;top:637.7px">D0158</div>
<div class="td" style="left:807px;top:637.7px"><span class="j" style="width:1.284em">裁剪</span></div>
<div class="td" style="left:905px;top:637.7px"><span class="j" style="width:4.866em">产品测试（勿动）</span></div>
<div class="td" style="left:1003px;top:637.7px"><span class="j" style="width:1.284em">婉董</span></div>
<div class="td" style="left:1098px;top:637.7px">5</div>
<div class="td" style="left:1173px;top:637.7px">1</div>
<div class="td" style="left:1249px;top:637.7px">5</div>
<div class="td" style="left:1617px;top:637.7px"><span class="j" style="width:1.881em">未结算</span></div>
<div class="td" style="left:1692px;top:637.7px">5</div>
<div class="td" style="left:1768px;top:637.7px"><span class="j" style="width:1.284em">新增</span></div>
<div class="td" style="left:1844px;top:637.7px">0</div>
<div class="td" style="left:1953px;top:637.7px">2023-12-08</div>
<div class="a" style="left:172px;top:689px;width:1854px;height:1px;background:#f5f5fc"></div>
<div class="td lk" style="left:179px;top:667.6px">MO20231208002</div>
<div class="td lk" style="left:280px;top:667.6px">PC20231208001</div>
<div class="td" style="left:376px;top:667.6px">132132132</div>
<div class="td" style="left:520px;top:667.6px"><span class="j" style="width:1.284em">浅蓝</span></div>
<div class="td" style="left:574px;top:667.6px"><span class="j" style="width:1.881em">报工单</span></div>
<div class="td lk" style="left:650px;top:667.6px">HB202312080051</div>
<div class="td" style="left:753px;top:667.6px">D0158</div>
<div class="td" style="left:807px;top:667.6px"><span class="j" style="width:1.284em">裁剪</span></div>
<div class="td" style="left:905px;top:667.6px"><span class="j" style="width:4.866em">产品测试（勿动）</span></div>
<div class="td" style="left:1003px;top:667.6px"><span class="j" style="width:1.284em">婉董</span></div>
<div class="td" style="left:1098px;top:667.6px">5</div>
<div class="td" style="left:1173px;top:667.6px">1</div>
<div class="td" style="left:1249px;top:667.6px">5</div>
<div class="td" style="left:1617px;top:667.6px"><span class="j" style="width:1.881em">未结算</span></div>
<div class="td" style="left:1692px;top:667.6px">5</div>
<div class="td" style="left:1768px;top:667.6px"><span class="j" style="width:1.284em">新增</span></div>
<div class="td" style="left:1844px;top:667.6px">0</div>
<div class="td" style="left:1953px;top:667.6px">2023-12-08</div>
<div class="a" style="left:172px;top:719px;width:1854px;height:1px;background:#f5f5fc"></div>
<div class="td lk" style="left:179px;top:697.6px">MO20231208002</div>
<div class="td lk" style="left:280px;top:697.6px">PC20231208001</div>
<div class="td" style="left:376px;top:697.6px">132132132</div>
<div class="td" style="left:520px;top:697.6px"><span class="j" style="width:1.284em">浅蓝</span></div>
<div class="td" style="left:574px;top:697.6px"><span class="j" style="width:1.881em">报工单</span></div>
<div class="td lk" style="left:650px;top:697.6px">HB202312080030</div>
<div class="td" style="left:753px;top:697.6px">D0158</div>
<div class="td" style="left:807px;top:697.6px"><span class="j" style="width:1.284em">裁剪</span></div>
<div class="td" style="left:905px;top:697.6px"><span class="j" style="width:4.866em">产品测试（勿动）</span></div>
<div class="td" style="left:1003px;top:697.6px"><span class="j" style="width:1.284em">婉董</span></div>
<div class="td" style="left:1098px;top:697.6px">5</div>
<div class="td" style="left:1173px;top:697.6px">1</div>
<div class="td" style="left:1249px;top:697.6px">5</div>
<div class="td" style="left:1617px;top:697.6px"><span class="j" style="width:1.881em">未结算</span></div>
<div class="td" style="left:1692px;top:697.6px">5</div>
<div class="td" style="left:1768px;top:697.6px"><span class="j" style="width:1.284em">新增</span></div>
<div class="td" style="left:1844px;top:697.6px">0</div>
<div class="td" style="left:1953px;top:697.6px">2023-12-08</div>
<div class="td lk" style="left:179px;top:727.5px">MO20231208002</div>
<div class="td lk" style="left:280px;top:727.5px">PC20231208001</div>
<div class="td" style="left:376px;top:727.5px">132132132</div>
<div class="td" style="left:520px;top:727.5px"><span class="j" style="width:1.284em">浅蓝</span></div>
<div class="td" style="left:574px;top:727.5px"><span class="j" style="width:1.881em">报工单</span></div>
<div class="td lk" style="left:650px;top:727.5px">HB202312080044</div>
<div class="td" style="left:753px;top:727.5px">D0158</div>
<div class="td" style="left:807px;top:727.5px"><span class="j" style="width:1.284em">裁剪</span></div>
<div class="td" style="left:905px;top:727.5px"><span class="j" style="width:4.866em">产品测试（勿动）</span></div>
<div class="td" style="left:1003px;top:727.5px"><span class="j" style="width:1.284em">婉董</span></div>
<div class="td" style="left:1098px;top:727.5px">5</div>
<div class="td" style="left:1173px;top:727.5px">1</div>
<div class="td" style="left:1249px;top:727.5px">5</div>
<div class="td" style="left:1617px;top:727.5px"><span class="j" style="width:1.881em">未结算</span></div>
<div class="td" style="left:1692px;top:727.5px">5</div>
<div class="td" style="left:1768px;top:727.5px"><span class="j" style="width:1.284em">新增</span></div>
<div class="td" style="left:1844px;top:727.5px">0</div>
<div class="td" style="left:1953px;top:727.5px">2023-12-08</div>
<div class="a" style="left:2026px;top:152px;width:1px;height:803px;background:#ececf8"></div>
<div class="a" style="left:172px;top:945px;width:1692px;height:10px;background:#d3d3cf"></div>
<div class="a" style="left:172px;top:955px;width:1855px;height:17px;background:#f5f5f8"></div>
<div class="sum" style="left:1174px">28</div>
<div class="sum" style="left:1249px">115.6</div>
<div class="sum" style="left:1325px">0</div>
<div class="sum" style="left:1401px">0</div>
<div class="sum" style="left:1477px">1</div>
<div class="sum" style="left:1542px">0</div>
<div class="sum" style="left:1692px">115.6</div>
<div class="pg" style="left:1597px;width:41px;color:#555;text-align:left;padding-left:6px">20<svg style="left:27px;top:8px" width="8" height="5" viewBox="0 0 8 5"><path d="M.7.7L4 4 7.3.7" fill="none" stroke="#333" stroke-width="1.3"/></svg></div>
<div class="a" style="left:1643px;top:982px;font-size:11px;line-height:14px;color:#555"><span class="j" style="width:0.688em">第</span>1<span class="j" style="width:0.688em">至</span>20<span class="j" style="width:1.881em">条，共</span>355<span class="j" style="width:0.688em">条</span></div>
<div class="pg" style="left:1753px;width:37px;color:#666;"><span class="j" style="width:1.284em">上页</span></div>
<div class="pg" style="left:1789px;width:22px;background:#1a8cf0;border-color:#1a8cf0;color:#fff;">1</div>
<div class="pg" style="left:1810px;width:21px;">2</div>
<div class="pg" style="left:1830px;width:22px;">3</div>
<div class="pg" style="left:1851px;width:22px;">4</div>
<div class="pg" style="left:1872px;width:22px;">5</div>
<div class="pg" style="left:1893px;width:26px;color:#666;">...</div>
<div class="pg" style="left:1918px;width:27px;">18</div>
<div class="pg" style="left:1944px;width:37px;color:#666;"><span class="j" style="width:1.284em">下页</span></div>
<div class="pg" style="left:1983px;width:35px;color:#bbb"><span class="j" style="width:1.284em">跳至</span></div>
</body></html>
